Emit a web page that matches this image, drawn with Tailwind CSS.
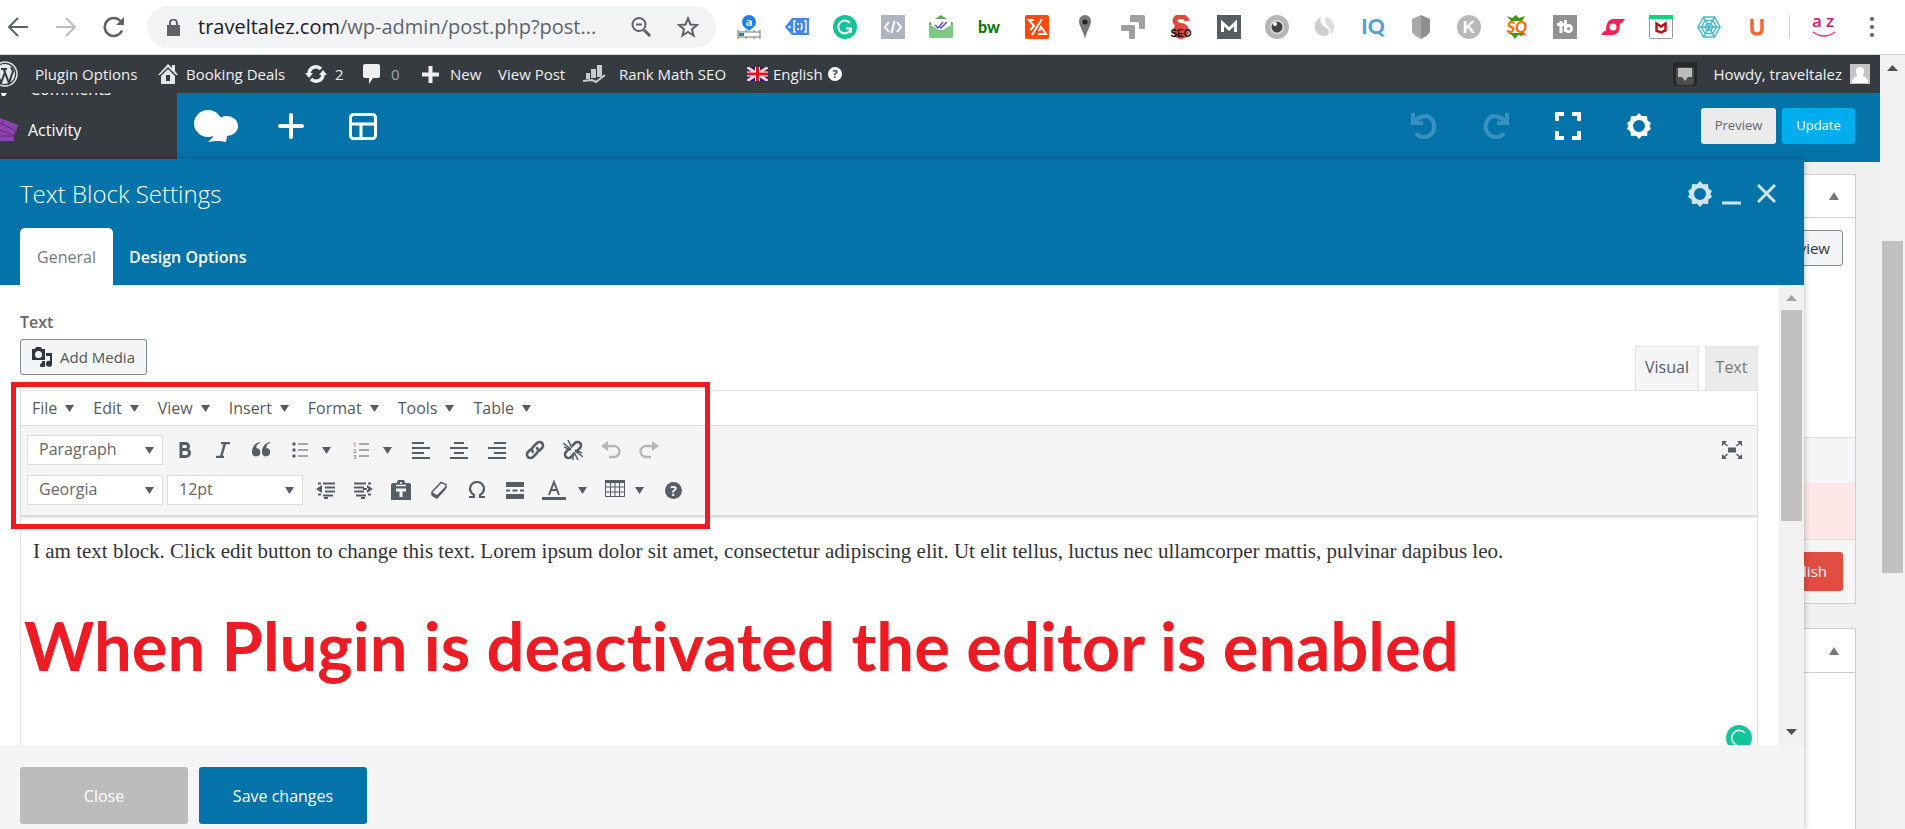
<!DOCTYPE html>
<html lang="en">
  <head>
    <meta charset="UTF-8" />
    <meta name="viewport" content="width=device-width, initial-scale=1.0" />
    <title>Edit Post - Text Block Settings</title>
    <script src="https://cdn.jsdelivr.net/npm/@tailwindcss/browser@4"></script>
  </head>
  <body class="h-screen flex flex-col overflow-hidden bg-[#f0f0f0] font-['Open_Sans',sans-serif] text-[#555d66]">
    <svg class="hidden">
      <symbol id="caret" viewBox="0 0 9 7"><path d="M0 0h9L4.500 7z" fill="currentColor" /></symbol>
      <symbol id="gear" viewBox="0 0 24 26">
        <path
          fill="currentColor"
          fill-rule="evenodd"
          d="M12 0l3 3.200 5-.2.500 4.500L24 10l-1.500 3L24 16l-3.500 2.500L20 23l-5-.2L12 26l-3-3.200L4 23l-.5-4.500L0 16l1.500-3L0 10l3.500-2.500L4 3l5 .2zM12 7a6 6 0 100 12 6 6 0 000-12z"
        />
      </symbol>
      <symbol id="undo-arrow" viewBox="0 0 26 28">
        <path d="M2 1v10h10M3 10C9 3 19 2 22 9c4 9-2 16-9 16-4 0-7-2-8-4" fill="none" stroke="currentColor" stroke-width="4" />
      </symbol>
    </svg>

    <!-- browser bar -->
    <header class="h-[55px] shrink-0 flex items-center bg-white border-b border-[#d5d7da] text-[#5f6368]">
      <button class="w-9 flex justify-center" aria-label="Back">
        <svg class="w-5 h-5" viewBox="0 0 20 20" fill="none" stroke="currentColor" stroke-width="2"><path d="M20 10H2M10 1L1 10l9 9" /></svg>
      </button>
      <button class="w-[60px] flex justify-center text-[#bcbec1]" aria-label="Forward">
        <svg class="w-5 h-5" viewBox="0 0 20 20" fill="none" stroke="currentColor" stroke-width="2"><path d="M0 10h18M10 1l9 9-9 9" /></svg>
      </button>
      <button class="w-9 flex justify-center" aria-label="Reload">
        <svg class="w-[22px] h-[22px]" viewBox="0 0 22 22" fill="none" stroke="currentColor" stroke-width="2.500">
          <path d="M19 14.500A9 9 0 1117.500 5" />
          <path d="M21 1v8h-8z" fill="currentColor" stroke="none" />
        </svg>
      </button>
      <div class="ml-[15px] w-[569px] h-[42px] flex items-center rounded-full bg-[#f1f3f4] pl-5 pr-[10px]">
        <svg class="w-[13px] h-[17px]" viewBox="0 0 13 17"><path fill="#5f6368" d="M0 6h13v11H0z" /><path d="M3 7V4a3.500 3.500 0 017 0v3" fill="none" stroke="#5f6368" stroke-width="2" /></svg>
        <a href="#" class="ml-[18px] flex-1 text-[20px] whitespace-nowrap text-[#5f6368]"><span class="text-[#202124]">traveltalez.com</span>/wp-admin/post.php?post...</a>
        <button class="w-10 flex justify-start" aria-label="Zoom">
          <svg class="w-[22px] h-[22px]" viewBox="0 0 22 22" fill="none" stroke="currentColor" stroke-width="2"><circle cx="9" cy="8.500" r="6.500" /><path d="M6 8.500h6" /><path d="M14 14l6 6" stroke-width="3" /></svg>
        </button>
        <button class="w-9 flex justify-center" aria-label="Bookmark">
          <svg class="w-[22px] h-[22px]" viewBox="0 0 22 22" fill="none" stroke="currentColor" stroke-width="2"><path d="M11 2.500l2.500 6 6.500.5-5 4.200 1.600 6.300L11 16l-5.600 3.500L7 13.200 2 9l6.500-.5z" /></svg>
        </button>
      </div>
      <div class="ml-[9px] flex items-center">
        <a href="#" class="w-12 flex justify-center" aria-label="Amazon tool">
          <svg class="w-6 h-6" viewBox="0 0 24 24"><circle cx="12" cy="7" r="7" fill="#1a80f0" /><path d="M9 13h6l-3 3z" fill="#1a80f0" /><text x="12" y="11" text-anchor="middle" font-family="Liberation Serif" font-weight="700" font-size="13" fill="#fff">a</text><path d="M1 15v9M23 15v9M1 17h22M1 22h22M9 15v2M17 15v2M9 22v2M17 22v2" stroke="#777" fill="none" /><path d="M2 18h5v3H2z" fill="#1a80f0" /></svg>
        </a>
        <a href="#" class="w-12 flex justify-center" aria-label="Tag">
          <svg class="w-6 h-6" viewBox="0 0 24 24"><path d="M7 3h17v17H7L0 12z" fill="#4285f4" /><circle cx="4.500" cy="12" r="1.300" fill="#fff" /><path d="M11 6H9v11h2M19 6h2v11h-2" stroke="#fff" stroke-width="1.500" fill="none" /><path d="M12 8h2v2h-2zM12 13h2v2h-2z" fill="#fff" /><path d="M16 8q2 3.500 0 7" stroke="#fff" stroke-width="1.500" fill="none" /></svg>
        </a>
        <a href="#" class="w-12 flex justify-center" aria-label="Grammarly">
          <svg class="w-6 h-6" viewBox="0 0 24 24"><circle cx="12" cy="12" r="12" fill="#15c39a" /><path d="M17 8a6.500 6.500 0 10.500 7M13 13.500h5V18" stroke="#fff" stroke-width="2" fill="none" /></svg>
        </a>
        <a href="#" class="w-12 flex justify-center" aria-label="Code">
          <svg class="w-6 h-6" viewBox="0 0 24 24"><path d="M0 0h24v24H0z" fill="#adb3c0" /><path d="M8 7l-4 5 4 5M16 7l4 5-4 5M13.500 6l-3 12" stroke="#fff" stroke-width="2" fill="none" /></svg>
        </a>
        <a href="#" class="w-12 flex justify-center" aria-label="Mail tracker">
          <svg class="w-6 h-6" viewBox="0 0 24 24"><path d="M0 8l12-8 12 8v12a3 3 0 01-3 3H3a3 3 0 01-3-3z" fill="#5aab5e" /><path d="M2 4h20v11H2z" fill="#fff" /><path d="M0 9l12 7 12-7v11a3 3 0 01-3 3H3a3 3 0 01-3-3z" fill="#81c784" /><path d="M6 10l3 3 5-6M11 12l1 1 6-6" stroke="#5b48d0" stroke-width="1.500" fill="none" /></svg>
        </a>
        <a href="#" class="w-12 flex justify-center" aria-label="BuiltWith">
          <svg class="w-6 h-6" viewBox="0 0 24 24"><text x="12" y="18" text-anchor="middle" font-family="Lato" font-weight="900" font-size="16" fill="#0c7a0c">bw</text></svg>
        </a>
        <a href="#" class="w-12 flex justify-center" aria-label="Sumo">
          <svg class="w-6 h-6" viewBox="0 0 24 24"><rect width="24" height="24" rx="2" fill="#ff4a0e" /><path d="M9 5H4l5 6-4 4M17 4L7 20M13 19h8l-5-7-2 4" stroke="#fff" stroke-width="2" fill="none" /></svg>
        </a>
        <a href="#" class="w-12 flex justify-center" aria-label="Pin">
          <svg class="w-6 h-6" viewBox="0 0 24 24"><path d="M12 0a6 6 0 016 6c0 5-4 9-6 18C10 15 6 11 6 6a6 6 0 016-6z" fill="#777" /><circle cx="12" cy="7" r="2.500" fill="#222" /></svg>
        </a>
        <a href="#" class="w-12 flex justify-center" aria-label="Arrows">
          <svg class="w-6 h-6" viewBox="0 0 24 24" fill="#a0a0a0"><path d="M10 0h12a2 2 0 012 2v11a1 1 0 01-1 1h-4a1 1 0 01-1-1V7h-8a1 1 0 01-1-1V1a1 1 0 011-1z" /><path d="M1 10h11a2 2 0 012 2v11a1 1 0 01-1 1H9a1 1 0 01-1-1v-7H1a1 1 0 01-1-1v-4a1 1 0 011-1z" /></svg>
        </a>
        <a href="#" class="w-12 flex justify-center" aria-label="SEO">
          <svg class="w-6 h-6" viewBox="0 0 24 24"><circle cx="12" cy="16" r="8" fill="#e0483a" /><path d="M18 6C17 0 6 0 6 6c0 5 11 4 11 9" fill="none" stroke="#e0483a" stroke-width="5" /><text x="12" y="22" text-anchor="middle" font-family="Liberation Sans" font-weight="700" font-size="10" fill="#111">SEO</text></svg>
        </a>
        <a href="#" class="w-12 flex justify-center" aria-label="Moz">
          <svg class="w-6 h-6" viewBox="0 0 24 24"><path d="M0 0h24v24H0z" fill="#555e60" /><path d="M5.500 17V8l6.500 6 6.500-6v9" fill="none" stroke="#fff" stroke-width="3" /></svg>
        </a>
        <a href="#" class="w-12 flex justify-center" aria-label="Eye">
          <svg class="w-6 h-6" viewBox="0 0 24 24"><circle cx="12" cy="12" r="12" fill="#b5b5b5" /><circle cx="12" cy="12" r="7" fill="#ddd" /><circle cx="12" cy="12" r="5.500" fill="#444" /><circle cx="10" cy="9" r="2" fill="#fff" /></svg>
        </a>
        <a href="#" class="w-12 flex justify-center" aria-label="SimilarWeb">
          <svg class="w-6 h-6" viewBox="0 0 24 24"><path d="M8 2C1 5 0 14 4 18s12 4 12-1c0-6-11-5-8-15z" fill="#cfcfcf" /><path d="M13 2c5 0 9 5 8 12l-3 6c1-8-9-10-5-18z" fill="#dedede" /></svg>
        </a>
        <a href="#" class="w-12 flex justify-center" aria-label="IQ">
          <svg class="w-6 h-6" viewBox="0 0 24 24"><text x="12" y="19" text-anchor="middle" font-family="Lato" font-weight="900" font-size="21" fill="#559fdb">IQ</text></svg>
        </a>
        <a href="#" class="w-12 flex justify-center" aria-label="Shield">
          <svg class="w-6 h-6" viewBox="0 0 24 24"><path d="M12 0l9 4v12c0 3-5 6-9 8z" fill="#8f8f8f" /><path d="M12 0L3 4v12c0 3 5 6 9 8z" fill="#a8a8a8" /></svg>
        </a>
        <a href="#" class="w-12 flex justify-center" aria-label="Keywords">
          <svg class="w-6 h-6" viewBox="0 0 24 24"><circle cx="12" cy="12" r="12" fill="#b9b9b9" /><text x="12" y="18" text-anchor="middle" font-family="Liberation Sans" font-weight="700" font-size="17" fill="#fff">K</text></svg>
        </a>
        <a href="#" class="w-12 flex justify-center" aria-label="SEOquake">
          <svg class="w-6 h-6" viewBox="0 0 24 24"><path d="M2 1l5 2 4-3 3 3 6-2-3 5H6zM3 18h16l-2 3-4-1-3 4-3-4z" fill="#3f9c10" /><text x="12" y="18" text-anchor="middle" font-family="Lato" font-weight="900" font-style="italic" font-size="16" fill="#ff6d00">SQ</text></svg>
        </a>
        <a href="#" class="w-12 flex justify-center" aria-label="TubeBuddy">
          <svg class="w-6 h-6" viewBox="0 0 24 24"><path d="M0 0h24v24H0z" fill="#919191" /><path d="M8 6v12M4 9.500h7M12.500 5v12" fill="none" stroke="#fff" stroke-width="3" /><circle cx="15.500" cy="13.500" r="3" fill="none" stroke="#fff" stroke-width="3" /></svg>
        </a>
        <a href="#" class="w-12 flex justify-center" aria-label="Stumble">
          <svg class="w-6 h-6" viewBox="0 0 24 24"><path d="M0 20l3-4h2c0-9 3-12 8-12h11l-3 4h-2c0 9-3 12-8 12z" fill="#ff2053" /><circle cx="12" cy="12" r="3.500" fill="#fff" /></svg>
        </a>
        <a href="#" class="w-12 flex justify-center" aria-label="McAfee">
          <svg class="w-6 h-6" viewBox="0 0 24 24"><rect x=".5" y=".5" width="23" height="23" rx="1" fill="#fff" stroke="#999" /><path d="M0 0h24v4H0z" fill="#0bd67c" /><path d="M7.500 16.500V8.500l4.500 3 4.500-3v7L12 17.500l-5-2" fill="none" stroke="#b5161b" stroke-width="2.500" /></svg>
        </a>
        <a href="#" class="w-12 flex justify-center" aria-label="Web">
          <svg class="w-6 h-6" viewBox="0 0 24 24" fill="none" stroke="#4bb8c8" stroke-width="1.500"><path d="M1 12L6.500 2h11L23 12l-5.500 10h-11zM4.500 12L8 5.500h8l3.500 6.500-3.500 6.500H8zM8 12l2-3.500h4l2 3.500-2 3.500h-4zM1 12h22M6.500 2l11 20M17.500 2l-11 20" /></svg>
        </a>
        <a href="#" class="w-12 flex justify-center" aria-label="Ubersuggest">
          <svg class="w-6 h-6" viewBox="0 0 24 24"><path d="M7 4v10q0 5 5 5t5-5V4" fill="none" stroke="#ff642d" stroke-width="3.500" /></svg>
        </a>
        <div class="ml-2 w-px h-6 bg-[#cfd1d4]"></div>
        <button class="ml-[10px] w-12 flex justify-center" aria-label="Profile">
          <svg class="w-6 h-6" viewBox="0 0 24 24"><text x="0" y="12" font-family="Open Sans" font-weight="600" font-size="17" fill="#d0157c">a</text><text x="14" y="12" font-family="Open Sans" font-weight="600" font-size="17" fill="#d0157c">z</text><path d="M1 17q11 8 22 0" fill="none" stroke="#e0307c" stroke-width="1.500" /></svg>
        </button>
        <button class="w-12 flex justify-center" aria-label="Menu">
          <svg class="w-1 h-[22px]" viewBox="0 0 4 22" fill="#5f6368"><circle cx="2" cy="3" r="2" /><circle cx="2" cy="11" r="2" /><circle cx="2" cy="19" r="2" /></svg>
        </button>
      </div>
    </header>

    <div class="flex-1 min-h-0 flex">
      <div class="flex-1 min-w-0 flex flex-col">
        <!-- admin bar -->
        <nav class="h-[38px] shrink-0 flex items-center bg-[#363b3f] text-[#f0f0f1] text-[15px] whitespace-nowrap pr-[10px]">
          <a href="#" class="w-[18px] overflow-hidden flex justify-end" aria-label="WordPress">
            <svg class="w-[26px] h-[26px] shrink-0" viewBox="0 0 26 26"><circle cx="13" cy="13" r="12" fill="none" stroke="#e4e6e8" stroke-width="1.500" /><circle cx="13" cy="13" r="10" fill="#e4e6e8" /><path d="M4 9l5 13 4-11-1-3M12 9l5 13 4-12-2-4M2 8h5M9 8h6" fill="none" stroke="#363b3f" stroke-width="2" /></svg>
          </a>
          <a href="#" class="ml-[17px] w-[123px]">Plugin Options</a>
          <a href="#" class="w-[147px] flex items-center gap-2">
            <svg class="w-5 h-5" viewBox="0 0 20 20" fill="#e4e6e8"><path d="M10 0l4 4V1h3v6l3 4h-2L10 3 2 11H0z" /><path d="M10 5l7 7v8H3v-8zM8 11v6h4v-6z" fill-rule="evenodd" /></svg>
            Booking Deals
          </a>
          <a href="#" class="w-[58px] flex items-center gap-2">
            <svg class="w-[22px] h-5" viewBox="0 0 22 20" fill="none" stroke="#f0f0f1" stroke-width="3.500"><path d="M4 10a7 7 0 0112-5M18 10a7 7 0 01-12 5" /><path d="M0 9h8l-4 5zM14 11h8l-4-5z" fill="#f0f0f1" stroke="none" /></svg>
            2
          </a>
          <a href="#" class="w-[59px] flex items-center gap-[11px] text-[#a0a5aa]">
            <svg class="w-[17px] h-5" viewBox="0 0 17 20"><path d="M2 0h13a2 2 0 012 2v10a2 2 0 01-2 2h-5l-4 6v-6H2a2 2 0 01-2-2V2a2 2 0 012-2z" fill="#f0f0f1" /></svg>
            0
          </a>
          <a href="#" class="w-[76px] flex items-center gap-[11px]">
            <svg class="w-[17px] h-[17px]" viewBox="0 0 17 17"><path d="M8.500 0v17M0 8.500h17" stroke="#f0f0f1" stroke-width="4" /></svg>
            New
          </a>
          <a href="#" class="w-[85px]">View Post</a>
          <a href="#" class="w-[164px] flex items-center gap-3">
            <svg class="w-6 h-[18px]" viewBox="0 0 24 18" fill="#c8cbce"><path d="M3 8h4v6H3zM8 4h5v9H8zM14 0h5v12h-5z" /><path d="M0 16l9-1 4 2 9-7" fill="none" stroke="#c8cbce" stroke-width="2" /></svg>
            Rank Math SEO
          </a>
          <a href="#" class="flex items-center gap-[5px]">
            <svg class="w-[21px] h-[14px]" viewBox="0 0 21 14"><path d="M0 0h21v14H0z" fill="#1b1b7a" /><path d="M0 0l21 14M21 0L0 14" stroke="#f3c8d0" stroke-width="3" /><path d="M10.500 0v14M0 7h21" stroke="#fff" stroke-width="5" /><path d="M10.500 0v14M0 7h21" stroke="#e01020" stroke-width="3" /></svg>
            English
            <svg class="w-[14px] h-[14px]" viewBox="0 0 14 14"><circle cx="7" cy="7" r="7" fill="#fff" /><text x="7" y="11" text-anchor="middle" font-family="Open Sans" font-weight="700" font-size="11" fill="#363b3f">?</text></svg>
          </a>
          <a href="#" class="ml-auto flex items-center" aria-label="Notifications">
            <svg class="w-6 h-6" viewBox="0 0 24 24"><rect width="24" height="24" rx="3" fill="#26292b" /><rect x="3" y="5" width="18" height="18" rx="3" fill="#4c4c4c" /><path d="M5 6h14v9h-4l-3 4-3-4H5z" fill="#bbb" /></svg>
          </a>
          <a href="#" class="ml-4 flex items-center gap-2">
            Howdy, traveltalez
            <svg class="w-5 h-5" viewBox="0 0 20 20"><path d="M0 0h20v20H0z" fill="#c4c4c4" /><path d="M10 3a4 4 0 014 4c0 3-1 4-1 5 3 1 5 3 5 7H2c0-4 2-6 5-7 0-1-1-2-1-5a4 4 0 014-4z" fill="#fff" /></svg>
          </a>
        </nav>

        <div class="h-[69px] shrink-0 flex">
          <div class="w-[177px] overflow-hidden bg-[#363b3f] text-white">
            <div class="h-[3px] relative overflow-hidden">
              <a href="#" class="absolute bottom-[-3px] left-[30px] text-[16px] leading-5">Comments</a>
              <svg class="absolute left-0 bottom-0 w-2 h-3" viewBox="0 0 8 12"><path d="M1 9h6l-4 6z" fill="#fff" /></svg>
            </div>
            <a href="#" class="h-[68px] flex items-center gap-2 text-[16px] leading-[68px]">
              <svg class="w-5 h-6" viewBox="0 0 20 24"><path d="M0 0l18 7-2 7h-1l-1 3v6H0z" fill="#8e44ad" /><path d="M0 5l16 8M0 12l15 6M0 18h14M3 3l-1 5" stroke="#5f2c77" fill="none" /></svg>
              Activity
            </a>
          </div>
          <div class="flex-1 flex items-center bg-[#0473aa] text-white pl-[17px] pr-[25px] pb-[3px]">
            <a href="#" aria-label="WPBakery">
              <svg class="w-11 h-8" viewBox="0 0 44 32" fill="#fff"><ellipse cx="14" cy="13.500" rx="14" ry="13.500" /><ellipse cx="33" cy="16" rx="11" ry="10" /><path d="M22 4c2 4 5 4 9 2l2 20-1 6q-8-2-18 0l5-5z" /></svg>
            </a>
            <button class="ml-10" aria-label="Add element">
              <svg class="w-[26px] h-[26px]" viewBox="0 0 26 26"><path d="M13 2v22M2 13h22" stroke="#fff" stroke-width="4" stroke-linecap="round" /></svg>
            </button>
            <button class="ml-[45px]" aria-label="Templates">
              <svg class="w-7 h-[27px]" viewBox="0 0 28 27" fill="none" stroke="#fff" stroke-width="3"><rect x="1.500" y="1.500" width="25" height="24" rx="3" /><path d="M1 11h26M12 11v15" /></svg>
            </button>
            <button class="ml-auto text-[#3a91bf]" aria-label="Undo"><svg class="w-[26px] h-7"><use href="#undo-arrow" /></svg></button>
            <button class="ml-[46px] text-[#3a91bf] -scale-x-100" aria-label="Redo"><svg class="w-[26px] h-7"><use href="#undo-arrow" /></svg></button>
            <button class="ml-[46px]" aria-label="Fullscreen">
              <svg class="w-[26px] h-7" viewBox="0 0 26 28" fill="none" stroke="#fff" stroke-width="4"><path d="M2 9V2h7M17 2h7v7M24 19v7h-7M9 26H2v-7" /></svg>
            </button>
            <button class="ml-[46px]" aria-label="Settings"><svg class="w-6 h-[26px]"><use href="#gear" /></svg></button>
            <button class="ml-[50px] w-[75px] h-9 rounded-[3px] bg-[#ebebeb] text-[13px] text-[#666]">Preview</button>
            <button class="ml-1.5 w-[73px] h-9 rounded-[3px] bg-[#00aef0] text-[13px]">Update</button>
          </div>
        </div>

        <div class="flex-1 min-h-0 flex">
          <!-- settings panel -->
          <section class="relative z-10 -mt-[3px] flex-1 min-w-0 flex flex-col bg-white shadow-[0_0_6px_rgba(0,0,0,0.3)]">
            <div class="h-[126px] shrink-0 flex flex-col justify-between bg-[#0473aa] text-white pl-5 pr-7">
              <div class="h-[69px] flex items-center text-[#cfe4ef]">
                <h2 class="flex-1 text-[24px] font-light text-white">Text Block Settings</h2>
                <button aria-label="Settings"><svg class="w-6 h-[26px]"><use href="#gear" /></svg></button>
                <button class="ml-[10px]" aria-label="Minimize"><svg class="w-[19px] h-[22px]" viewBox="0 0 19 22"><path d="M0 20h19" stroke="currentColor" stroke-width="3" /></svg></button>
                <button class="ml-4" aria-label="Close"><svg class="w-[19px] h-[19px]" viewBox="0 0 19 19"><path d="M1 1l17 17M18 1L1 18" stroke="currentColor" stroke-width="3" /></svg></button>
              </div>
              <div class="h-[57px] flex text-[16px]">
                <button class="w-[93px] rounded-t-[5px] bg-white text-[#777]">General</button>
                <button class="px-4 font-semibold">Design Options</button>
              </div>
            </div>

            <div class="flex-1 min-h-0 flex overflow-hidden">
              <div class="relative flex-1 min-w-0 flex flex-col pl-5 pr-[21px] pt-[27px]">
                <div class="flex items-end justify-between">
                  <div class="pb-[15px]">
                    <p class="text-[16px] leading-5 font-semibold text-[#666]">Text</p>
                    <button class="mt-[7px] h-9 w-[127px] flex items-center justify-center gap-2 rounded-[3px] border border-[#7e8993] bg-[#f3f5f6] text-[15px] text-[#555]">
                      <svg class="w-5 h-5" viewBox="0 0 20 20" fill="#32373c"><path d="M1 2h2l1-2h5l1 2h3v11H0V2zM6.500 4a3 3 0 100 7 3 3 0 000-7z" fill-rule="evenodd" /><path d="M14 6h6v11a3 3 0 11-2-3V9h-4zM10 14h3v4a2.500 2.500 0 11-3-2z" /></svg>
                      Add Media
                    </button>
                  </div>
                  <div class="flex gap-1.5 text-[16px]">
                    <button class="w-16 h-11 pb-1 border border-b-0 border-[#e5e5e5] bg-[#f5f5f5]">Visual</button>
                    <button class="w-[53px] h-11 pb-1 border border-b-0 border-[#e5e5e5] bg-[#ebebeb] text-[#777]">Text</button>
                  </div>
                </div>

                <div class="relative flex-1 border border-b-0 border-[#e2e2e2]">
                  <div class="h-[35px] flex items-center gap-[19px] pl-[11px] text-[16px] text-[#595959] border-b border-[#ddd]">
                    <button class="flex items-center gap-2">File<svg class="w-[9px] h-[7px]"><use href="#caret" /></svg></button>
                    <button class="flex items-center gap-2">Edit<svg class="w-[9px] h-[7px]"><use href="#caret" /></svg></button>
                    <button class="flex items-center gap-2">View<svg class="w-[9px] h-[7px]"><use href="#caret" /></svg></button>
                    <button class="flex items-center gap-2">Insert<svg class="w-[9px] h-[7px]"><use href="#caret" /></svg></button>
                    <button class="flex items-center gap-2">Format<svg class="w-[9px] h-[7px]"><use href="#caret" /></svg></button>
                    <button class="flex items-center gap-2">Tools<svg class="w-[9px] h-[7px]"><use href="#caret" /></svg></button>
                    <button class="flex items-center gap-2">Table<svg class="w-[9px] h-[7px]"><use href="#caret" /></svg></button>
                  </div>
                  <div class="h-[91px] flex justify-between bg-[#f5f5f5] border-b-2 border-[#dcdcdc] shadow-[0_1px_2px_rgba(0,0,0,0.1)] pt-[9px] pl-1.5 pr-[15px] text-[#555d66]">
                    <div class="flex flex-col gap-[10px]">
                      <div class="h-[30px] flex items-center">
                        <label class="relative">
                          <select aria-label="Block format" class="appearance-none w-[136px] h-[30px] pl-[11px] pb-0.5 border border-[#ddd] bg-white text-[16px] text-[#666]"><option>Paragraph</option></select>
                          <svg class="absolute right-[9px] top-3 w-[9px] h-[7px] pointer-events-none"><use href="#caret" /></svg>
                        </label>
                        <button class="ml-[3px] w-[38px] flex justify-center" aria-label="Bold"><svg class="w-[14px] h-4" viewBox="0 0 14 16"><path d="M3 1.500h4.500a3 3 0 010 6H3M3 7.500h5a3.500 3.500 0 010 7H3M3 0v16" fill="none" stroke="currentColor" stroke-width="3" /></svg></button>
                        <button class="w-[38px] flex justify-center" aria-label="Italic"><svg class="w-[14px] h-4" viewBox="0 0 14 16"><path d="M5 1h9M0 15h8M9 1L5 15" fill="none" stroke="currentColor" stroke-width="2.500" /></svg></button>
                        <button class="w-[38px] flex justify-center" aria-label="Quote"><svg class="w-[18px] h-4" viewBox="0 0 18 16" fill="currentColor"><path d="M8 1C5 2 4 4 4.500 6a4.200 4.200 0 11-4.500 5C-.5 5 3 1 8 0zM18 1c-3 1-4 3-3.500 5a4.200 4.200 0 11-4.500 5c-.5-6 3-10 8-11z" /></svg></button>
                        <button class="w-[61px] flex items-center gap-[14px] pl-3" aria-label="Bulleted list"><svg class="w-4 h-4" viewBox="0 0 16 16"><path d="M6 2h10M6 8h10M6 14h10" stroke="currentColor" /><circle cx="2" cy="2" r="1.700" fill="currentColor" /><circle cx="2" cy="8" r="1.700" fill="currentColor" /><circle cx="2" cy="14" r="1.700" fill="currentColor" /></svg><svg class="w-[9px] h-[7px]"><use href="#caret" /></svg></button>
                        <button class="w-[61px] flex items-center gap-[14px] pl-3" aria-label="Numbered list"><svg class="w-4 h-[18px]" viewBox="0 0 16 18"><path d="M6 3h10M6 9h10M6 15h10" stroke="currentColor" /><text x="0" y="6" font-family="Open Sans" font-size="6" fill="currentColor">1</text><text x="0" y="12" font-family="Open Sans" font-size="6" fill="currentColor">2</text><text x="0" y="18" font-family="Open Sans" font-size="6" fill="currentColor">3</text></svg><svg class="w-[9px] h-[7px]"><use href="#caret" /></svg></button>
                        <button class="w-[38px] flex justify-center" aria-label="Align left"><svg class="w-[18px] h-[17px]" viewBox="0 0 18 17"><path d="M0 1h12M0 6h18M0 11h12M0 16h18" stroke="currentColor" stroke-width="2" /></svg></button>
                        <button class="w-[38px] flex justify-center" aria-label="Align center"><svg class="w-[18px] h-[17px]" viewBox="0 0 18 17"><path d="M4 1h10M0 6h18M4 11h10M0 16h18" stroke="currentColor" stroke-width="2" /></svg></button>
                        <button class="w-[38px] flex justify-center" aria-label="Align right"><svg class="w-[18px] h-[17px]" viewBox="0 0 18 17"><path d="M6 1h12M0 6h18M6 11h12M0 16h18" stroke="currentColor" stroke-width="2" /></svg></button>
                        <button class="w-[38px] flex justify-center" aria-label="Insert link"><svg class="w-5 h-5" viewBox="0 0 20 20" fill="none" stroke="currentColor" stroke-width="2.500" stroke-linecap="round"><path d="M8 12a3.500 3.500 0 010-5l4-4a3.500 3.500 0 015 5l-2.500 2.500M12 8a3.500 3.500 0 010 5l-4 4a3.500 3.500 0 01-5-5l2.500-2.500" /></svg></button>
                        <button class="w-[38px] flex justify-center" aria-label="Remove link"><svg class="w-5 h-5" viewBox="0 0 20 20" fill="none" stroke="currentColor" stroke-width="2.500"><path d="M9 6l3-3a3.500 3.500 0 015 5l-3 3M11 14l-3 3a3.500 3.500 0 01-5-5l3-3" /><path d="M0 3l8 6M1 7l7 3M5 0l4 8M20 17l-8-6M19 13l-7-3M15 20l-4-8M10 20v-7" stroke-width="1.500" /></svg></button>
                        <button class="w-[38px] flex justify-center text-[#b4b8bc]" aria-label="Undo"><svg class="w-5 h-[18px]" viewBox="0 0 20 18"><path d="M4 5h9a5.500 5.500 0 010 11H8" fill="none" stroke="currentColor" stroke-width="2.500" /><path d="M7 0v10L0 5z" fill="currentColor" /></svg></button>
                        <button class="w-[38px] flex justify-center text-[#b4b8bc]" aria-label="Redo"><svg class="w-5 h-[18px]" viewBox="0 0 20 18"><path d="M16 5H7a5.500 5.500 0 000 11h5" fill="none" stroke="currentColor" stroke-width="2.500" /><path d="M13 0v10l7-5z" fill="currentColor" /></svg></button>
                      </div>
                      <div class="h-[30px] flex items-center">
                        <label class="relative">
                          <select aria-label="Font family" class="appearance-none w-[136px] h-[30px] pl-[11px] pb-0.5 border border-[#ddd] bg-white text-[16px] text-[#666]"><option>Georgia</option></select>
                          <svg class="absolute right-[9px] top-3 w-[9px] h-[7px] pointer-events-none"><use href="#caret" /></svg>
                        </label>
                        <label class="relative ml-1">
                          <select aria-label="Font size" class="appearance-none w-[136px] h-[30px] pl-[11px] pb-0.5 border border-[#ddd] bg-white text-[16px] text-[#666]"><option>12pt</option></select>
                          <svg class="absolute right-[9px] top-3 w-[9px] h-[7px] pointer-events-none"><use href="#caret" /></svg>
                        </label>
                        <button class="ml-[3px] w-[38px] flex justify-center" aria-label="Decrease indent"><svg class="w-[19px] h-[17px]" viewBox="0 0 19 17"><path d="M7 1.500h12M9 5.500h10M9 9.500h10M7 13.500h10M2 1.500h3M2 12.500h3M8 16h4" stroke="currentColor" stroke-width="2" /><path d="M6 3v8L0 7z" fill="currentColor" /></svg></button>
                        <button class="w-[38px] flex justify-center" aria-label="Increase indent"><svg class="w-[19px] h-[17px]" viewBox="0 0 19 17"><path d="M0 1.500h12M0 5.500h10M0 9.500h10M2 13.500h10M14 1.500h3M14 12.500h3M7 16h4" stroke="currentColor" stroke-width="2" /><path d="M13 3v8l6-4zM9 6h5v2H9z" fill="currentColor" /></svg></button>
                        <button class="w-[38px] flex justify-center" aria-label="Paste as text"><svg class="w-5 h-5" viewBox="0 0 20 20"><path d="M2 3h4a4 4 0 018 0h4l2 1v16H0V4z" fill="currentColor" /><path d="M5 5.500h10M10 2v2" stroke="#f5f5f5" stroke-width="1.500" /><path d="M5 10h10M10 10v7" stroke="#f5f5f5" stroke-width="3" /></svg></button>
                        <button class="w-[38px] flex justify-center" aria-label="Clear formatting"><svg class="w-[18px] h-[19px]" viewBox="0 0 18 19"><path d="M11 1.500l5 2v3L7 16l-5-2v-3z" fill="#f5f5f5" stroke="currentColor" stroke-width="1.500" /><path d="M2 11l5 3 9-9v3l-9 10-5-3z" fill="currentColor" /></svg></button>
                        <button class="w-[38px] flex justify-center" aria-label="Special character"><svg class="w-[18px] h-[18px]" viewBox="0 0 18 18"><path d="M1 16h5v-2C3 12 2 10 2 8c0-4 3-7 7-7s7 3 7 7c0 2-1 4-4 6v2h5" fill="none" stroke="currentColor" stroke-width="2.200" /></svg></button>
                        <button class="w-[38px] flex justify-center" aria-label="Read more"><svg class="w-[18px] h-[17px]" viewBox="0 0 18 17"><path d="M0 0h18v5H0zM0 12h18v5H0zM0 7.500h4v2H0zM6.500 7.500h5v2h-5zM14 7.500h4v2h-4z" fill="currentColor" /></svg></button>
                        <button class="w-[62px] flex items-center gap-3 pl-2" aria-label="Text color"><svg class="w-6 h-5" viewBox="0 0 24 20"><path d="M7 15l5-13 5 13M8.500 10h7" fill="none" stroke="currentColor" stroke-width="2" /><path d="M0 17h24v3H0z" fill="currentColor" /></svg><svg class="w-[9px] h-[7px]"><use href="#caret" /></svg></button>
                        <button class="w-[62px] flex items-center gap-[10px] pl-[9px]" aria-label="Table"><svg class="w-5 h-5" viewBox="0 0 20 20"><path d="M.5 2v14.500h19V2M.5 7h19M.5 12h19M5.500 3v13M10 3v13M14.500 3v13" fill="none" stroke="currentColor" /><path d="M0 0h20v3H0z" fill="currentColor" /></svg><svg class="w-[9px] h-[7px]"><use href="#caret" /></svg></button>
                        <button class="w-[30px] flex justify-center" aria-label="Help"><svg class="w-[17px] h-[17px]" viewBox="0 0 17 17"><circle cx="8.500" cy="8.500" r="8.500" fill="currentColor" /><text x="8.500" y="13.500" text-anchor="middle" font-family="Open Sans" font-weight="700" font-size="14" fill="#f5f5f5">?</text></svg></button>
                      </div>
                    </div>
                    <button class="h-[30px] flex items-center" aria-label="Distraction free">
                      <svg class="w-5 h-[18px]" viewBox="0 0 20 18"><path d="M1 1l18 16M19 1L1 17" stroke="currentColor" stroke-width="1.500" /><path d="M5 5h10v8H5z" fill="#f5f5f5" /><path d="M6 6.500h8v5H6zM0 0h5L0 5zM20 0h-5l5 5zM0 18h5l-5-5zM20 18h-5l5-5z" fill="currentColor" /></svg>
                    </button>
                  </div>
                  <p class="pt-[18px] pl-3 font-['Liberation_Serif',serif] text-[21px] leading-8 text-[#333] whitespace-nowrap">I am text block. Click edit button to change this text. Lorem ipsum dolor sit amet, consectetur adipiscing elit. Ut elit tellus, luctus nec ullamcorper mattis, pulvinar dapibus leo.</p>
                  <h1 class="mt-[38px] pl-[3px] font-['Lato',sans-serif] font-bold text-[67px] leading-[80px] text-[#ed1c24] whitespace-nowrap [font-variant-ligatures:none]">When Plugin is deactivated the editor is enabled</h1>
                  <div class="absolute -left-[10px] -top-[9px] w-[699px] h-[147px] border-[5px] border-[#ed1c24] pointer-events-none"></div>
                </div>
                <svg class="absolute right-[27px] -bottom-1.5 w-[26px] h-[26px]" viewBox="0 0 26 26"><circle cx="13" cy="13" r="13" fill="#15c39a" /><path d="M19 8a7.500 7.500 0 10-8 12" fill="none" stroke="#d8f5ee" stroke-width="1.800" /></svg>
              </div>
              <div class="w-[25px] flex flex-col items-center bg-[#f1f1f1] py-[10px]">
                <svg class="w-[11px] h-[6px] shrink-0" viewBox="0 0 11 6"><path d="M0 6h11L5.500 0z" fill="#a3a3a3" /></svg>
                <div class="mt-[9px] w-[21px] h-[211px] bg-[#c1c1c1]"></div>
                <svg class="mt-auto w-[11px] h-[6px] shrink-0" viewBox="0 0 11 6"><path d="M0 0h11L5.500 6z" fill="#505050" /></svg>
              </div>
            </div>

            <div class="h-[84px] shrink-0 flex gap-[11px] bg-[#f5f5f5] pl-5 pt-[22px] text-[16px] text-white">
              <button class="w-[168px] h-[57px] rounded-[3px] bg-[#bcbcbc]">Close</button>
              <button class="w-[168px] h-[57px] rounded-[3px] bg-[#0473aa]">Save changes</button>
            </div>
          </section>

          <!-- post sidebar, mostly covered by the panel -->
          <aside class="w-[76px] shrink-0 flex flex-col gap-6 overflow-hidden pt-3 pr-6 text-[15px]">
            <div class="shrink-0 border border-l-0 border-[#ccd0d4] bg-white">
              <div class="h-[43px] flex items-center justify-end pr-4 border-b border-[#ccd0d4]"><svg class="w-[10px] h-2" viewBox="0 0 10 8"><path d="M0 8h10L5 0z" fill="#72777c" /></svg></div>
              <div class="h-[220px] flex justify-end pt-3 pr-3 border-b border-[#ddd]">
                <button class="w-[88px] h-9 shrink-0 pr-3 text-right rounded-[3px] border border-[#7e8993] bg-[#f3f5f6] text-[#32373c]">Preview</button>
              </div>
              <div class="h-[45px] bg-[#f5f5f5]"></div>
              <div class="h-[57px] bg-[#fde8e7] border-b border-[#ddd]"></div>
              <div class="h-[63px] flex justify-end pt-3 pr-3 bg-[#f5f5f5]">
                <button class="w-[88px] h-[39px] shrink-0 pr-4 text-right rounded-[3px] bg-[#e14d43] text-white">Publish</button>
              </div>
            </div>
            <div class="h-[300px] shrink-0 border border-l-0 border-[#ccd0d4] bg-white">
              <div class="h-[44px] flex items-center justify-end pr-4 border-b border-[#ccd0d4]"><svg class="w-[10px] h-2" viewBox="0 0 10 8"><path d="M0 8h10L5 0z" fill="#72777c" /></svg></div>
            </div>
          </aside>
        </div>
      </div>

      <div class="w-[25px] shrink-0 flex flex-col items-center bg-[#f1f1f1] pt-[10px]">
        <svg class="w-[11px] h-[6px] shrink-0" viewBox="0 0 11 6"><path d="M0 6h11L5.500 0z" fill="#505050" /></svg>
        <div class="mt-[170px] w-[21px] h-[332px] bg-[#c1c1c1]"></div>
      </div>
    </div>
  </body>
</html>
